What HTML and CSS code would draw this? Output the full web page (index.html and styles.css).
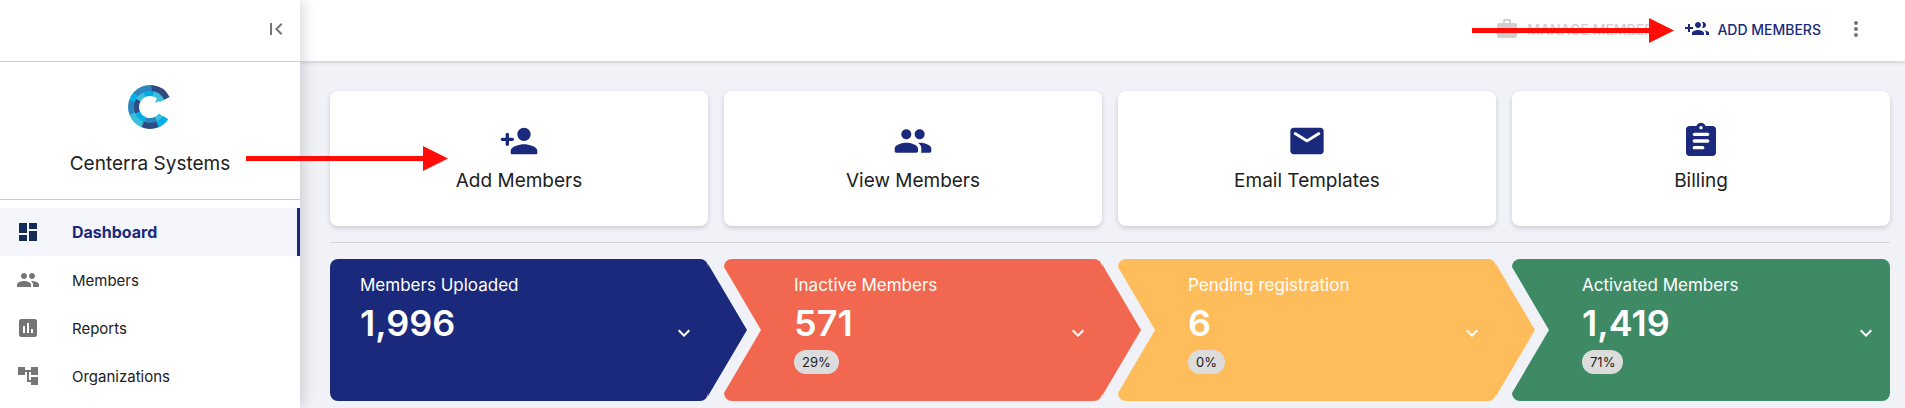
FILE: index.html
```html
<!DOCTYPE html>
<html lang="en">
<head>
    <meta charset="UTF-8">
    <meta name="viewport" content="width=device-width, initial-scale=1.0">
    <title>Centerra Systems - Dashboard</title>
    <link rel="stylesheet" href="styles.css">
</head>
<body>
    <div class="app">
        <aside class="sidebar">
            <div class="sidebar-top">
                <button class="icon-btn" aria-label="Collapse menu">
                    <svg class="icon" viewBox="0 0 24 24"><path d="M18.41 16.59L13.82 12l4.59-4.59L17 6l-6 6 6 6zM6 6h2v12H6z"/></svg>
                </button>
            </div>

            <div class="company">
                <svg class="logo" viewBox="0 0 44 44" fill="none">
                    <!-- inner ring -->
                    <g stroke-width="6">
                        <circle cx="22" cy="22" r="14" pathLength="360" stroke="#38c0da" stroke-dasharray="28 332" stroke-dashoffset="-36"/>
                        <circle cx="22" cy="22" r="14" pathLength="360" stroke="#2a86bd" stroke-dasharray="50 310" stroke-dashoffset="-63"/>
                        <circle cx="22" cy="22" r="14" pathLength="360" stroke="#00aee8" stroke-dasharray="45 315" stroke-dashoffset="-112"/>
                        <circle cx="22" cy="22" r="14" pathLength="360" stroke="#2f4a80" stroke-dasharray="56 304" stroke-dashoffset="-156"/>
                        <circle cx="22" cy="22" r="14" pathLength="360" stroke="#38c0da" stroke-dasharray="35 325" stroke-dashoffset="-211"/>
                        <circle cx="22" cy="22" r="14" pathLength="360" stroke="#00aee8" stroke-dasharray="42 318" stroke-dashoffset="-245"/>
                        <circle cx="22" cy="22" r="14" pathLength="360" stroke="#38c0da" stroke-dasharray="47 313" stroke-dashoffset="-286"/>
                    </g>
                    <path fill="#38c0da" d="M27 18l2-5 7 1z"/>
                    <!-- outer ring -->
                    <g stroke-width="6">
                        <circle cx="22" cy="22" r="19" pathLength="360" stroke="#00aee8" stroke-dasharray="34 326" stroke-dashoffset="-34"/>
                        <circle cx="22" cy="22" r="19" pathLength="360" stroke="#2f4a80" stroke-dasharray="47 313" stroke-dashoffset="-67"/>
                        <circle cx="22" cy="22" r="19" pathLength="360" stroke="#38c0da" stroke-dasharray="47 313" stroke-dashoffset="-113"/>
                        <circle cx="22" cy="22" r="19" pathLength="360" stroke="#2a86bd" stroke-dasharray="41 319" stroke-dashoffset="-159"/>
                        <circle cx="22" cy="22" r="19" pathLength="360" stroke="#00aee8" stroke-dasharray="23 337" stroke-dashoffset="-199"/>
                        <circle cx="22" cy="22" r="19" pathLength="360" stroke="#2a86bd" stroke-dasharray="55 305" stroke-dashoffset="-221"/>
                        <circle cx="22" cy="22" r="19" pathLength="360" stroke="#2f4a80" stroke-dasharray="58 302" stroke-dashoffset="-275"/>
                    </g>
                </svg>
                <div class="company-name">Centerra Systems</div>
            </div>

            <nav class="menu">
                <a href="#" class="menu-item active">
                    <svg class="icon" viewBox="0 0 24 24"><path d="M3 13h8V3H3v10zm0 8h8v-6H3v6zm10 0h8V11h-8v10zm0-18v6h8V3h-8z"/></svg>
                    Dashboard
                </a>
                <a href="#" class="menu-item">
                    <svg class="icon" viewBox="0 0 24 24"><path d="M16 11c1.66 0 2.99-1.34 2.99-3S17.66 5 16 5s-3 1.34-3 3 1.34 3 3 3zm-8 0c1.66 0 2.99-1.34 2.99-3S9.66 5 8 5 5 6.34 5 8s1.34 3 3 3zm0 2c-2.33 0-7 1.17-7 3.5V19h14v-2.5c0-2.33-4.67-3.5-7-3.5zm8 0c-.29 0-.62.02-.97.05 1.16.84 1.97 1.97 1.97 3.45V19h6v-2.5c0-2.33-4.67-3.5-7-3.5z"/></svg>
                    Members
                </a>
                <a href="#" class="menu-item">
                    <svg class="icon" viewBox="0 0 24 24"><path d="M19 3H5c-1.1 0-2 .9-2 2v14c0 1.1.9 2 2 2h14c1.1 0 2-.9 2-2V5c0-1.1-.9-2-2-2zM9 17H7v-7h2v7zm4 0h-2V7h2v10zm4 0h-2v-4h2v4z"/></svg>
                    Reports
                </a>
                <a href="#" class="menu-item">
                    <svg class="icon" viewBox="0 0 24 24"><path d="M22 11V3h-7v3H9V3H2v8h7V8h2v10h4v3h7v-8h-7v3h-2V8h2v3z"/></svg>
                    Organizations
                </a>
            </nav>
        </aside>

        <div class="content">
            <header class="topbar">
                <button class="top-btn" disabled>
                    <svg class="icon" viewBox="0 0 24 24"><path d="M20 6h-4V4c0-1.11-.89-2-2-2h-4c-1.11 0-2 .89-2 2v2H4c-1.11 0-1.99.89-1.99 2L2 19c0 1.11.89 2 2 2h16c1.11 0 2-.89 2-2V8c0-1.11-.89-2-2-2zm-6 0h-4V4h4v2z"/></svg>
                    MANAGE MEMBERS
                </button>
                <button class="top-btn">
                    <svg class="icon" viewBox="0 0 24 24"><path d="M8 10H5V7H3v3H0v2h3v3h2v-3h3v-2zm10 1c1.66 0 2.99-1.34 2.99-3S19.66 5 18 5c-.32 0-.63.05-.91.14.57.81.9 1.79.9 2.86s-.34 2.04-.9 2.86c.28.09.59.14.91.14zm-5 0c1.66 0 2.99-1.34 2.99-3S14.66 5 13 5c-1.66 0-3 1.34-3 3s1.34 3 3 3zm6.62 2.16c.83.73 1.38 1.66 1.38 2.84v2h3v-2c0-1.54-2.37-2.49-4.38-2.84zM13 13c-2 0-6 1-6 3v2h12v-2c0-2-4-3-6-3z"/></svg>
                    ADD MEMBERS
                </button>
                <button class="icon-btn" aria-label="More options">
                    <svg class="icon" viewBox="0 0 24 24"><path d="M12 8c1.1 0 2-.9 2-2s-.9-2-2-2-2 .9-2 2 .9 2 2 2zm0 2c-1.1 0-2 .9-2 2s.9 2 2 2 2-.9 2-2-.9-2-2-2zm0 6c-1.1 0-2 .9-2 2s.9 2 2 2 2-.9 2-2-.9-2-2-2z"/></svg>
                </button>
                <svg class="pointer pointer-top" viewBox="0 0 202 25"><path d="M0 10h177V0l25 12.5L177 25V15H0z"/></svg>
            </header>

            <main class="main">
                <div class="cards">
                    <a href="#" class="card">
                        <svg viewBox="0 0 24 24"><path d="M15 12c2.21 0 4-1.79 4-4s-1.79-4-4-4-4 1.79-4 4 1.79 4 4 4zm-9-2V8c0-.55-.45-1-1-1s-1 .45-1 1v2H2c-.55 0-1 .45-1 1s.45 1 1 1h2v2c0 .55.45 1 1 1s1-.45 1-1v-2h2c.55 0 1-.45 1-1s-.45-1-1-1H6zm9 4c-2.67 0-8 1.34-8 4v1c0 .55.45 1 1 1h14c.55 0 1-.45 1-1v-1c0-2.66-5.33-4-8-4z"/></svg>
                        <span>Add Members</span>
                    </a>
                    <a href="#" class="card">
                        <svg viewBox="0 0 24 24"><path d="M16 11c1.66 0 2.99-1.34 2.99-3S17.66 5 16 5s-3 1.34-3 3 1.34 3 3 3zm-8 0c1.66 0 2.99-1.34 2.99-3S9.66 5 8 5 5 6.34 5 8s1.34 3 3 3zm0 2c-2.33 0-7 1.17-7 3.5V18c0 .55.45 1 1 1h12c.55 0 1-.45 1-1v-1.5c0-2.33-4.67-3.5-7-3.5zm8 0c-.29 0-.62.02-.97.05.02.01.03.03.04.04 1.14.83 1.93 1.94 1.93 3.41V18c0 .35-.07.69-.18 1H22c.55 0 1-.45 1-1v-1.5c0-2.33-4.67-3.5-7-3.5z"/></svg>
                        <span>View Members</span>
                    </a>
                    <a href="#" class="card">
                        <svg viewBox="0 0 24 24"><path d="M20 4H4c-1.1 0-1.99.9-1.99 2L2 18c0 1.1.9 2 2 2h16c1.1 0 2-.9 2-2V6c0-1.1-.9-2-2-2zm-.4 4.25l-7.07 4.42c-.32.2-.74.2-1.06 0L4.4 8.25c-.25-.16-.4-.43-.4-.72 0-.67.73-1.07 1.3-.72L12 11l6.7-4.19c.57-.35 1.3.05 1.3.72 0 .29-.15.56-.4.72z"/></svg>
                        <span>Email Templates</span>
                    </a>
                    <a href="#" class="card">
                        <svg viewBox="0 0 24 24"><path d="M19 3h-4.18C14.4 1.84 13.3 1 12 1s-2.4.84-2.82 2H5c-1.1 0-2 .9-2 2v14c0 1.1.9 2 2 2h14c1.1 0 2-.9 2-2V5c0-1.1-.9-2-2-2zm-7 0c.55 0 1 .45 1 1s-.45 1-1 1-1-.45-1-1 .45-1 1-1zm1 14H8c-.55 0-1-.45-1-1s.45-1 1-1h5c.55 0 1 .45 1 1s-.45 1-1 1zm3-4H8c-.55 0-1-.45-1-1s.45-1 1-1h8c.55 0 1 .45 1 1s-.45 1-1 1zm0-4H8c-.55 0-1-.45-1-1s.45-1 1-1h8c.55 0 1 .45 1 1s-.45 1-1 1z"/></svg>
                        <span>Billing</span>
                    </a>
                </div>

                <hr class="divider">

                <div class="steps">
                    <section class="step uploaded">
                        <div class="step-info">
                            <div class="step-label">Members Uploaded</div>
                            <div class="step-count">1,996</div>
                        </div>
                        <button class="expand" aria-label="Show uploaded members">
                            <svg class="icon" viewBox="0 0 24 24"><path d="M16.59 8.59L12 13.17 7.41 8.59 6 10l6 6 6-6z"/></svg>
                        </button>
                    </section>
                    <section class="step inactive">
                        <div class="step-info">
                            <div class="step-label">Inactive Members</div>
                            <div class="step-count">571</div>
                            <span class="percent">29%</span>
                        </div>
                        <button class="expand" aria-label="Show inactive members">
                            <svg class="icon" viewBox="0 0 24 24"><path d="M16.59 8.59L12 13.17 7.41 8.59 6 10l6 6 6-6z"/></svg>
                        </button>
                    </section>
                    <section class="step pending">
                        <div class="step-info">
                            <div class="step-label">Pending registration</div>
                            <div class="step-count">6</div>
                            <span class="percent">0%</span>
                        </div>
                        <button class="expand" aria-label="Show pending members">
                            <svg class="icon" viewBox="0 0 24 24"><path d="M16.59 8.59L12 13.17 7.41 8.59 6 10l6 6 6-6z"/></svg>
                        </button>
                    </section>
                    <section class="step activated">
                        <div class="step-info">
                            <div class="step-label">Activated Members</div>
                            <div class="step-count">1,419</div>
                            <span class="percent">71%</span>
                        </div>
                        <button class="expand" aria-label="Show activated members">
                            <svg class="icon" viewBox="0 0 24 24"><path d="M16.59 8.59L12 13.17 7.41 8.59 6 10l6 6 6-6z"/></svg>
                        </button>
                    </section>
                </div>
            </main>
        </div>

        <svg class="pointer pointer-card" viewBox="0 0 202 25"><path d="M0 10h177V0l25 12.5L177 25V15H0z"/></svg>
    </div>
</body>
</html>
```
FILE: styles.css
```css
* {
    margin: 0;
    padding: 0;
    box-sizing: border-box;
}

body {
    background: #f0f2f7;
    color: #212121;
    font-family: Inter, Roboto, sans-serif;
    font-size: 15px;
}

a {
    color: inherit;
    text-decoration: none;
}

button {
    background: none;
    border: none;
    font-family: inherit;
    cursor: pointer;
}

.icon {
    display: block;
    width: 24px;
    height: 24px;
    fill: currentColor;
}

.icon-btn {
    color: #757575;
}

.app {
    position: relative;
    display: flex;
    min-height: 100vh;
}

/* Sidebar */
.sidebar {
    position: relative;
    z-index: 5;
    width: 300px;
    flex-shrink: 0;
    background: white;
    box-shadow: 0 0 16px rgba(0,0,0,0.22);
}

.sidebar-top {
    display: flex;
    align-items: center;
    justify-content: flex-end;
    height: 62px;
    padding: 0 12px 4px;
    border-bottom: 1px solid #ccc;
}

.company {
    display: flex;
    flex-direction: column;
    align-items: center;
    gap: 21px;
    padding: 23px 16px 21px;
    border-bottom: 1px solid #ccc;
}

.logo {
    width: 44px;
    height: 44px;
}

.company-name {
    font-size: 19px;
    line-height: 28px;
}

.menu {
    padding-top: 8px;
}

.menu-item {
    display: flex;
    align-items: center;
    gap: 32px;
    height: 48px;
    padding-left: 16px;
}

.menu-item .icon {
    color: #757575;
}

.menu-item.active {
    background: #f5f6fb;
    border-right: 3px solid #1a297b;
    color: #1a297b;
    font-size: 16px;
    font-weight: bold;
}

.menu-item.active .icon {
    color: #122b57;
}

/* Top bar */
.content {
    flex: 1;
    min-width: 0;
}

.topbar {
    position: relative;
    display: flex;
    align-items: center;
    justify-content: flex-end;
    height: 61px;
    padding: 0 37px 3px 0;
    background: white;
    box-shadow: 0 1px 4px rgba(0,0,0,0.18);
}

.top-btn {
    display: flex;
    align-items: center;
    gap: 8px;
    margin-right: 23px;
    color: #1a297b;
    font-size: 14px;
    font-weight: 500;
}

.top-btn:disabled {
    color: #d0d0d0;
}

/* Main area */
.main {
    padding: 30px 15px 7px 30px;
}

.cards, .steps {
    display: grid;
    grid-template-columns: repeat(4, 1fr);
    gap: 16px;
}

.card {
    display: flex;
    flex-direction: column;
    align-items: center;
    gap: 5px;
    padding: 30px 20px;
    background: white;
    border-radius: 8px;
    box-shadow: 0 2px 5px rgba(0,0,0,0.16);
    font-size: 19px;
    line-height: 30px;
}

.card svg {
    width: 40px;
    height: 40px;
    fill: #1a297b;
}

.divider {
    margin: 16px 0;
    border: none;
    border-top: 1px solid #d2d4d9;
}

/* Steps */
.step {
    position: relative;
    display: flex;
    align-items: center;
    justify-content: space-between;
    height: 142px;
    padding: 0 12px 0 70px;
    border-radius: 8px;
    color: white;
}

.step:first-child {
    padding-left: 30px;
}

/* arrow tip on the right side */
.step:not(:last-child)::after {
    content: "";
    position: absolute;
    z-index: 2;
    top: 5px;
    bottom: 5px;
    left: 100%;
    width: 39px;
    background: inherit;
    clip-path: polygon(0 0, 100% 50%, 0 100%);
}

/* notch on the left side */
.step:not(:first-child)::before {
    content: "";
    position: absolute;
    z-index: 1;
    top: 8px;
    bottom: 8px;
    left: 0;
    width: 37px;
    background: #f0f2f7;
    clip-path: polygon(0 0, 100% 50%, 0 100%);
}

.uploaded {
    background: #1a297b;
}

.inactive {
    background: #f26750;
}

.pending {
    background: #ffbc5a;
}

.activated {
    background: #3e8a65;
}

.step-info {
    align-self: flex-start;
    padding-top: 14px;
}

.step-label {
    font-size: 17px;
    line-height: 24px;
}

.step-count {
    font-size: 36px;
    font-weight: 600;
    line-height: 53px;
}

.percent {
    display: inline-block;
    padding: 0 8px;
    background: #dcdcdc;
    border-radius: 12px;
    color: #212121;
    font-size: 13px;
    line-height: 24px;
}

.expand {
    margin-top: 6px;
    color: white;
}

/* Red pointers */
.pointer {
    position: absolute;
    z-index: 10;
    width: 202px;
    height: 25px;
    fill: #ff0d06;
}

.pointer-top {
    top: 18px;
    right: 231px;
}

.pointer-card {
    top: 146px;
    left: 246px;
}
```
